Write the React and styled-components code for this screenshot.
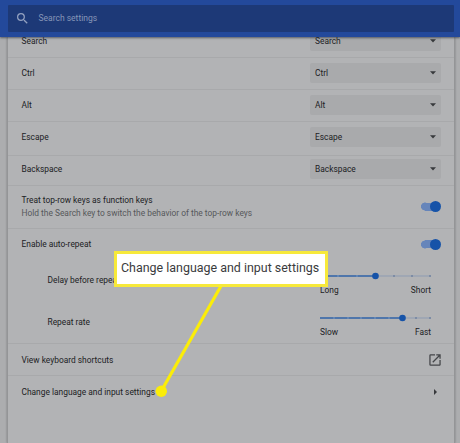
import React from 'react';
import styled, { createGlobalStyle } from 'styled-components';

const Global = createGlobalStyle`
  * { box-sizing: border-box; }
  body { margin: 0; background: #acadaf; overflow: hidden; font-family: Roboto, "Liberation Sans", sans-serif; }
`;
const Page = styled.div`
  position: relative;
  width: 460px;
  height: 443px;
  overflow: hidden;
  display: flex;
  flex-direction: column;
  font-size: 8.4px;
  line-height: 12px;
  color: #202124;
`;
const Header = styled.header`
  flex: none;
  height: 37px;
  padding: 5px 6px 5px 8px;
  background: #23499b;
  box-shadow: 0 1px 2px rgba(40, 48, 60, 0.65);
  z-index: 1;
`;
const SearchField = styled.div`
  height: 27px;
  display: flex;
  align-items: center;
  gap: 10.5px;
  padding: 0 0 1px 9px;
  border-radius: 1px;
  background: #1d3977;
  color: #8796b8;
  font-size: 8.5px;
  svg { display: block; }
`;
const Card = styled.main`
  flex: none;
  width: 448px;
  height: 406px;
  margin-left: 7px;
  border: solid #949597;
  border-width: 0 1px;
  box-shadow: 0 0 2px rgba(0, 0, 0, 0.3);
  background: #b2b3b5;
`;
const Row = styled.div`
  height: ${(p) => p.$h}px;
  padding: 0 13px 0 13.5px;
  padding-top: ${(p) => p.$top || 0}px;
  padding-bottom: ${(p) => p.$bottom || 0}px;
  display: flex;
  align-items: center;
  justify-content: space-between;
  border-bottom: ${(p) => (p.$last ? 0 : 1)}px solid #a8a9ab;
`;
const Select = styled.div`
  width: 131px;
  height: 20px;
  padding: 0 5px;
  display: flex;
  align-items: center;
  justify-content: space-between;
  border-radius: 2px;
  background: #a9aaac;
`;
const Secondary = styled.div`
  margin-top: 1px;
  color: #56585b;
`;
const Toggle = styled.div`
  width: 20px;
  height: 11px;
  display: flex;
  align-items: center;
  justify-content: flex-end;
  background: linear-gradient(#6685ba, #6685ba) 4px 50% / 12px 8px no-repeat,
    radial-gradient(circle at 4px 50%, #6685ba 3.7px, transparent 4.3px);
  &::after { content: ''; width: 11px; height: 11px; border-radius: 50%; background: #1653a8; }
`;
const RepeatGroup = styled.div`
  height: 115px;
  border-bottom: 1px solid #a8a9ab;
`;
const SliderRow = styled.div`
  height: 42px;
  display: flex;
  justify-content: space-between;
  padding: 8px 23px 0 39.5px;
`;
const SliderLabel = styled.div`
  margin-top: 4px;
`;
const SliderBox = styled.div`
  width: 111px;
  svg { display: block; }
`;
const SliderEnds = styled.div`
  display: flex;
  justify-content: space-between;
  margin-top: 2px;
`;
const Callout = styled.div`
  position: absolute;
  left: 114px;
  top: 251px;
  width: 214px;
  height: 36px;
  display: flex;
  align-items: center;
  padding: 0 0 2px 4px;
  border: 3px solid #f7e93a;
  background: #fff;
  color: #3a3b3d;
  font-size: 12.45px;
  white-space: nowrap;
`;
const Pointer = styled.svg`
  position: absolute;
  left: 0;
  top: 0;
`;

const Caret = () => (
  <svg width="6" height="4" viewBox="0 0 6 4"><path d="M0 .3h6L3 3.5z" fill="#37393c" /></svg>
);
const keys = [
  { name: 'Search', h: 21, bottom: 12 },
  { name: 'Ctrl', h: 32, bottom: 1 },
  { name: 'Alt', h: 32, bottom: 1 },
  { name: 'Escape', h: 34, bottom: 3 },
  { name: 'Backspace', h: 30, bottom: 4 },
];

function Slider({ value, ticks, from, to }) {
  return (
    <SliderBox>
      <svg width="111" height="12" viewBox="0 0 111 12">
        <path d="M0 6H111" stroke="#8d9bb2" strokeWidth="1" />
        <path d={`M0 6H${value}`} stroke="#3466a8" strokeWidth="1.6" />
        {ticks.map((x) => (
          <path key={x} d={`M${x} 5.2v1.6`} stroke={x < value ? '#83a0c6' : '#4b6590'} strokeWidth="1" />
        ))}
        <circle cx={value} cy="6" r="3.3" fill="#1653a8" />
      </svg>
      <SliderEnds><span>{from}</span><span>{to}</span></SliderEnds>
    </SliderBox>
  );
}

export default function App() {
  return (
    <Page>
      <Global />
      <Header>
        <SearchField>
          <svg width="11" height="11" viewBox="3 3 18 18" fill="#93a1c0">
            <path d="M15.5 14h-.79l-.28-.27A6.471 6.471 0 0 0 16 9.5 6.5 6.5 0 1 0 9.5 16c1.61 0 3.09-.59 4.23-1.57l.27.28v.79l5 4.99L20.49 19l-4.99-5zm-6 0C7.01 14 5 11.99 5 9.5S7.01 5 9.5 5 14 7.01 14 9.5 11.99 14 9.5 14z" />
          </svg>
          Search settings
        </SearchField>
      </Header>
      <Card>
        {keys.map((k) => (
          <Row key={k.name} $h={k.h} $bottom={k.bottom}>
            <span>{k.name}</span>
            <Select><span>{k.name}</span><Caret /></Select>
          </Row>
        ))}
        <Row $h={43} $bottom={1}>
          <div>
            <div>Treat top-row keys as function keys</div>
            <Secondary>Hold the Search key to switch the behavior of the top-row keys</Secondary>
          </div>
          <Toggle />
        </Row>
        <RepeatGroup>
          <Row $h={33} $bottom={3} $last>
            <span>Enable auto-repeat</span>
            <Toggle />
          </Row>
          <SliderRow>
            <SliderLabel>Delay before repeat</SliderLabel>
            <Slider value={55.5} ticks={[18, 37, 74, 92, 110]} from="Long" to="Short" />
          </SliderRow>
          <SliderRow>
            <SliderLabel>Repeat rate</SliderLabel>
            <Slider value={82.5} ticks={[14, 28, 41, 55, 69, 96, 110]} from="Slow" to="Fast" />
          </SliderRow>
        </RepeatGroup>
        <Row $h={32}>
          <span>View keyboard shortcuts</span>
          <svg width="12" height="12" viewBox="2.5 2.5 19 19" fill="#444649">
            <path d="M19 19H5V5h7V3H5a2 2 0 0 0-2 2v14a2 2 0 0 0 2 2h14c1.1 0 2-.9 2-2v-7h-2v7zM14 3v2h3.59l-9.83 9.83 1.41 1.41L19 6.41V10h2V3h-7z" />
          </svg>
        </Row>
        <Row $h={32} $bottom={1} $last>
          <span>Change language and input settings</span>
          <svg width="8" height="6" viewBox="0 0 8 6"><path d="M1 0v6l3-3z" fill="#37393c" /></svg>
        </Row>
      </Card>
      <Pointer width="460" height="443" viewBox="0 0 460 443">
        <path d="M161 391.5L221 286" stroke="#fbed08" strokeWidth="3.2" />
        <circle cx="161.3" cy="391.3" r="5.7" fill="#fbed08" />
      </Pointer>
      <Callout>Change language and input settings</Callout>
    </Page>
  );
}
